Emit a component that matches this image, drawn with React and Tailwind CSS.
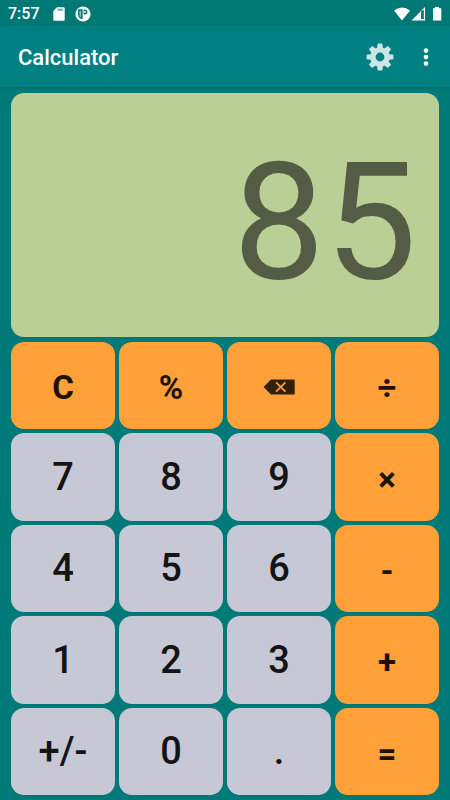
import React from "react";

function Backspace() {
  return (
    <svg viewBox="0 0 32 16" className="h-4 w-8" aria-hidden="true">
      <path d="M0.5 8 8 0.5H31.7V15.5H8Z" fill="#33200c" />
      <path d="M13 3.3 22.5 12.7M22.5 3.3 13 12.7" stroke="#ffa038" strokeWidth="1.7" />
    </svg>
  );
}

const keys = [
  { label: "C", action: true },
  { label: "%", action: true },
  { label: "Backspace", action: true, icon: <Backspace /> },
  { label: "÷", action: true },
  { label: "7" },
  { label: "8" },
  { label: "9" },
  { label: "×", action: true },
  { label: "4" },
  { label: "5" },
  { label: "6" },
  { label: "-", action: true },
  { label: "1" },
  { label: "2" },
  { label: "3" },
  { label: "+", action: true },
  { label: "+/-" },
  { label: "0" },
  { label: "." },
  { label: "=", action: true },
];

function Key({ label, action, icon }) {
  const tone = action
    ? "bg-[#ffa038] text-[#1c1206] text-[33px] font-bold"
    : "bg-[#c7c8d6] text-[#141414] text-[38px] font-medium";
  const nudge = action ? (icon ? "pt-0.5" : "pt-1") : "";
  return (
    <button
      type="button"
      aria-label={label}
      className={`flex items-center justify-center rounded-[13px] leading-none shadow-xs ${tone} ${nudge}`}
    >
      {icon || label}
    </button>
  );
}

function StatusBar() {
  return (
    <div className="flex h-[26px] items-center bg-[#007874] px-2 pt-px text-white">
      <span className="pt-px text-base font-medium leading-none">7:57</span>
      <svg viewBox="0 0 12 14" className="ml-[13px] h-[14px] w-3" aria-hidden="true">
        <path d="M4 0.3H10.7Q11.7 0.3 11.7 1.3V12.7Q11.7 13.7 10.7 13.7H1.3Q0.3 13.7 0.3 12.7V4Z" fill="#fff" />
        <path d="M4.5 1.6H10.2V3.8H4.5Z" fill="#6fb3b0" />
      </svg>
      <svg viewBox="0 0 16 16" className="ml-[10px] h-4 w-4" aria-hidden="true">
        <circle cx="8" cy="8" r="7.6" fill="#fff" />
        <path d="M3 4.1Q3 3.3 4 3.3H7.6V13.1H6Q3 11.8 3 9Z" fill="#007874" />
        <path d="M4.4 4.8H6V11.2Q4.4 10.4 4.4 9Z" fill="#8cc2bf" />
        <path d="M8.6 3.4H10A2.5 2.5 0 0 1 10 8.4H8.6Z" fill="#007874" />
        <path d="M9.2 5H10A0.9 0.9 0 0 1 10 6.8H9.2Z" fill="#fff" />
      </svg>
      <svg viewBox="0 0 48 16" className="ml-auto h-4 w-12" aria-hidden="true">
        <path d="M0 4.6Q8 -1.6 16 4.6L8 14.4Z" fill="#fff" />
        <path d="M31 1V14.4H17.6Z" fill="#fff" />
        <path d="M27 5.6 29.8 3.5V13H27Z" fill="#007874" />
        <path d="M41 1H45V2.3H47.3V14.4H39V2.3H41Z" fill="#fff" />
      </svg>
    </div>
  );
}

function Toolbar() {
  const teeth = [0, 45, 90, 135, 180, 225, 270, 315];
  return (
    <header className="flex h-[61px] items-center bg-[#008080] pl-[18px] pr-[14px] text-white shadow-sm">
      <h1 className="pt-0.5 text-[22px] font-medium leading-none">Calculator</h1>
      <button type="button" aria-label="Settings" className="ml-auto">
        <svg viewBox="0 0 28 28" className="h-7 w-7" fill="#cce6e6" aria-hidden="true">
          {teeth.map((angle) => (
            <path key={angle} d="M10.9 6 11.7 0.6H16.3L17.1 6Z" transform={`rotate(${angle} 14 14)`} />
          ))}
          <circle cx="14" cy="14" r="7.1" fill="none" stroke="#cce6e6" strokeWidth="5.4" />
        </svg>
      </button>
      <button type="button" aria-label="More options" className="ml-6">
        <svg viewBox="0 0 18 20" className="h-5 w-[18px]" fill="#fff" aria-hidden="true">
          <circle cx="8" cy="3.6" r="2.3" />
          <circle cx="8" cy="10.1" r="2.3" />
          <circle cx="8" cy="16.6" r="2.3" />
        </svg>
      </button>
    </header>
  );
}

export default function App() {
  return (
    <div className="flex min-h-screen flex-col bg-[#007a78] font-[Roboto,sans-serif]">
      <StatusBar />
      <Toolbar />
      <main className="flex flex-1 flex-col gap-[5px] px-[11px] pb-[5px] pt-[6px]">
        <output
          aria-label="Result"
          className="flex h-[244px] items-center justify-end rounded-[13px] bg-[#bacf96] pr-[22px] pt-[14px] text-[164px] leading-none text-[#555c45] shadow-xs"
        >
          85
        </output>
        <div className="grid flex-1 grid-cols-4 grid-rows-5 gap-1">
          {keys.map((key) => (
            <Key key={key.label} {...key} />
          ))}
        </div>
      </main>
    </div>
  );
}
